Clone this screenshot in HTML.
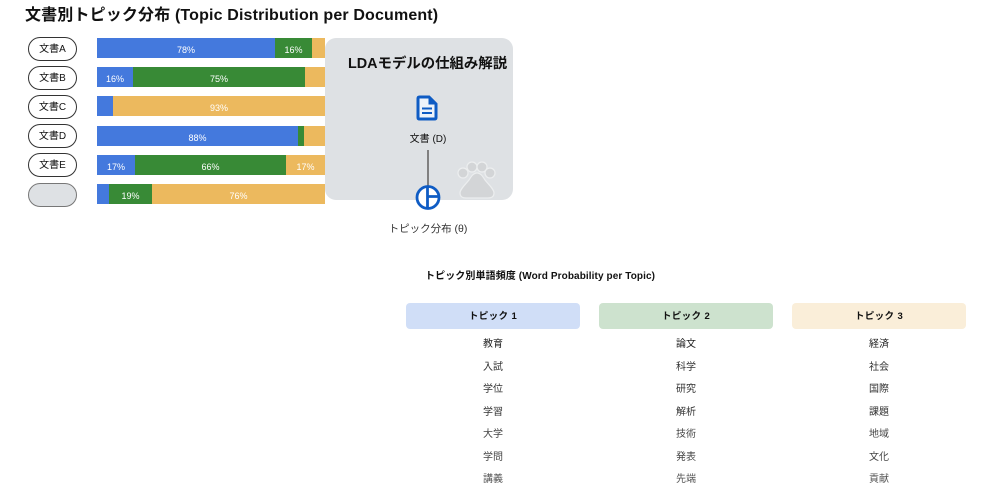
<!DOCTYPE html>
<html lang="ja"><head><meta charset="utf-8">
<style>
html,body{margin:0;padding:0;background:#fff;width:1000px;height:500px;overflow:hidden}
body{position:relative;font-family:"Liberation Sans","Noto Sans CJK JP",sans-serif;color:#111}
.a{position:absolute;white-space:nowrap}
.c{transform:translateX(-50%)}
.pill{position:absolute;left:28px;width:47px;height:22px;border:1.5px solid #333;border-radius:12px;background:#fff;font-size:10px;line-height:23px;text-align:center}
.bar{position:absolute;height:20px;color:#fff;font-size:9px;line-height:25px;text-align:center}
.b{background:#4479dd}.g{background:#388a36}.o{background:#ecb95e}
.th{position:absolute;top:303px;width:174px;height:26px;border-radius:4px;font-size:9.5px;font-weight:bold;line-height:28px;text-align:center;letter-spacing:.4px}
.w{position:absolute;font-size:10px;color:#333;transform:translateX(-50%);white-space:nowrap;line-height:14px}
</style></head><body>
<div class="a" style="left:25px;top:6px;font-size:16px;font-weight:bold;line-height:20px;letter-spacing:.15px">文書別トピック分布 (Topic Distribution per Document)</div>

<div class="pill" style="top:37px">文書A</div>
<div class="pill" style="top:66px">文書B</div>
<div class="pill" style="top:95px">文書C</div>
<div class="pill" style="top:124px">文書D</div>
<div class="pill" style="top:153px">文書E</div>
<div class="pill" style="top:183px;background:#dee1e4;border-color:#777"></div>

<div class="bar b" style="left:97px;top:38px;width:178px">78%</div><div class="bar g" style="left:275px;top:38px;width:37px">16%</div><div class="bar o" style="left:312px;top:38px;width:13px"></div>
<div class="bar b" style="left:97px;top:67px;width:36px">16%</div><div class="bar g" style="left:133px;top:67px;width:172px">75%</div><div class="bar o" style="left:305px;top:67px;width:20px"></div>
<div class="bar b" style="left:97px;top:96px;width:16px"></div><div class="bar o" style="left:113px;top:96px;width:212px">93%</div>
<div class="bar b" style="left:97px;top:126px;width:201px">88%</div><div class="bar g" style="left:298px;top:126px;width:6px"></div><div class="bar o" style="left:304px;top:126px;width:21px"></div>
<div class="bar b" style="left:97px;top:155px;width:38px">17%</div><div class="bar g" style="left:135px;top:155px;width:151px">66%</div><div class="bar o" style="left:286px;top:155px;width:39px">17%</div>
<div class="bar b" style="left:97px;top:184px;width:12px"></div><div class="bar g" style="left:109px;top:184px;width:43px">19%</div><div class="bar o" style="left:152px;top:184px;width:173px">76%</div>

<div class="a" style="left:325px;top:38px;width:188px;height:162px;background:#dee1e4;border-radius:11px"></div>
<div class="a" style="left:348px;top:54px;font-size:14.400px;font-weight:bold;line-height:20px">LDAモデルの仕組み解説</div>

<svg class="a" style="left:416px;top:95px" width="22" height="26" viewBox="0 0 22 26">
<path d="M3.500 2H13L20 9V22.500Q20 24 18.500 24H3.500Q2 24 2 22.500V3.500Q2 2 3.500 2Z" fill="#eef3fa" stroke="#0f5cc4" stroke-width="3"/>
<path d="M12.500 2V9.500H20L12.500 2Z" fill="#0f5cc4"/>
<path d="M6 13.500H16M6 18H16" stroke="#0f5cc4" stroke-width="2"/>
</svg>
<div class="a c" style="left:428px;top:133px;font-size:10px;line-height:14px">文書 (D)</div>
<div class="a" style="left:427px;top:150px;width:2px;height:36px;background:#808080"></div>
<svg class="a" style="left:414px;top:184px" width="28" height="28" viewBox="0 0 28 28">
<circle cx="14" cy="13.500" r="11" fill="#fff" stroke="#0f5cc4" stroke-width="2.800"/>
<path d="M13.500 3V25M13.500 12.500H25" stroke="#0f5cc4" stroke-width="2.800"/>
</svg>
<svg class="a" style="left:456px;top:158px" width="42" height="42" viewBox="0 0 42 42">
<g fill="#d3d5d7" stroke="#eceeef" stroke-width="1.200">
<circle cx="7" cy="15" r="5"/><circle cx="16" cy="9" r="5"/><circle cx="26" cy="9" r="5"/><circle cx="34" cy="15" r="5"/>
<path d="M21 15C24.500 15 26.500 18 29 22C32 26 38 31 38 35C38 39 35 40 32 40H10C7 40 4 39 4 35C4 31 10 26 13 22C15.500 18 17.500 15 21 15Z"/>
</g></svg>
<div class="a c" style="left:428px;top:222px;font-size:10.500px;color:#333;line-height:15px">トピック分布 (θ)</div>

<div class="a" style="left:425px;top:270px;font-size:10px;font-weight:bold;line-height:14px;letter-spacing:.1px">トピック別単語頻度 (Word Probability per Topic)</div>

<div class="th" style="left:406px;background:#d0def7">トピック 1</div>
<div class="th" style="left:599px;background:#cde2ce">トピック 2</div>
<div class="th" style="left:792px;background:#faeed9">トピック 3</div>

<div class="w" style="left:493px;top:338px;color:#222">教育</div><div class="w" style="left:493px;top:361px;color:#333">入試</div><div class="w" style="left:493px;top:383px;color:#333">学位</div><div class="w" style="left:493px;top:406px;color:#333">学習</div><div class="w" style="left:493px;top:428px;color:#444">大学</div><div class="w" style="left:493px;top:451px;color:#444">学問</div><div class="w" style="left:493px;top:473px;color:#555">講義</div>
<div class="w" style="left:686px;top:338px;color:#222">論文</div><div class="w" style="left:686px;top:361px;color:#333">科学</div><div class="w" style="left:686px;top:383px;color:#333">研究</div><div class="w" style="left:686px;top:406px;color:#333">解析</div><div class="w" style="left:686px;top:428px;color:#444">技術</div><div class="w" style="left:686px;top:451px;color:#444">発表</div><div class="w" style="left:686px;top:473px;color:#555">先端</div>
<div class="w" style="left:879px;top:338px;color:#222">経済</div><div class="w" style="left:879px;top:361px;color:#333">社会</div><div class="w" style="left:879px;top:383px;color:#333">国際</div><div class="w" style="left:879px;top:406px;color:#333">課題</div><div class="w" style="left:879px;top:428px;color:#444">地域</div><div class="w" style="left:879px;top:451px;color:#444">文化</div><div class="w" style="left:879px;top:473px;color:#555">貢献</div>
</body></html>
